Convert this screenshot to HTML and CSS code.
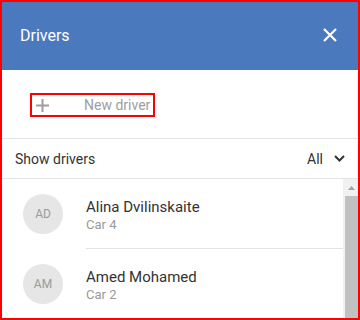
FILE: index.html
```html
<!DOCTYPE html>
<html lang="en">
<head>
  <meta charset="UTF-8">
  <meta name="viewport" content="width=device-width, initial-scale=1.0">
  <link rel="stylesheet" href="styles.css">
  <title>Drivers</title>
</head>
<body>
  <div class="panel">
    <div class="header">
      <span class="title">Drivers</span>
      <button class="close" aria-label="Close">
        <svg width="14" height="14" viewBox="0 0 14 14">
          <path d="M1 1L13 13M13 1L1 13" stroke="#fff" stroke-width="2.2" fill="none"/>
        </svg>
      </button>
    </div>

    <div class="actions">
      <button class="new-driver">
        <svg class="plus" width="15" height="15" viewBox="0 0 15 15">
          <path d="M7.5 1V14M1 7.5H14" stroke="#9e9e9e" stroke-width="2" fill="none"/>
        </svg>
        <span>New driver</span>
      </button>
    </div>

    <div class="filter">
      <span>Show drivers</span>
      <span class="select">All
        <svg width="11" height="7" viewBox="0 0 11 7">
          <path d="M1 1L5.5 5.5L10 1" stroke="#333" stroke-width="2" fill="none"/>
        </svg>
      </span>
    </div>

    <div class="list-wrap">
      <div class="list">
        <div class="driver">
          <div class="avatar">AD</div>
          <div class="info">
            <div class="name">Alina Dvilinskaite</div>
            <div class="car">Car 4</div>
          </div>
        </div>
        <div class="driver">
          <div class="avatar">AM</div>
          <div class="info">
            <div class="name">Amed Mohamed</div>
            <div class="car">Car 2</div>
          </div>
        </div>
      </div>
      <div class="scrollbar">
        <div class="scroll-up">
          <svg width="7" height="4" viewBox="0 0 7 4">
            <path d="M0 4L3.5 0L7 4Z" fill="#a3a3a3"/>
          </svg>
        </div>
        <div class="scroll-thumb"></div>
      </div>
    </div>
  </div>
</body>
</html>
```

FILE: styles.css
```css
body {
  margin: 0;
  font-family: Roboto, 'Liberation Sans', sans-serif;
}

.panel {
  box-sizing: border-box;
  width: 360px;
  height: 320px;
  border: 2px solid #ff0000;
  overflow: hidden;
  display: flex;
  flex-direction: column;
  background: #fff;
}

.header {
  flex: none;
  height: 68px;
  background-color: #4b79bd;
  display: flex;
  align-items: center;
  justify-content: space-between;
  padding: 0 21px 0 18px;
}

.title {
  color: #fff;
  font-size: 16px;
  margin-top: -2px;
}

.close {
  border: none;
  background: none;
  padding: 0;
  display: flex;
  margin-top: -2px;
  cursor: pointer;
}

.actions {
  flex: none;
  height: 69px;
  border-bottom: 1px solid #e3e3e3;
  padding: 23px 0 0 28px;
  box-sizing: border-box;
}

.new-driver {
  box-sizing: border-box;
  width: 125px;
  height: 24px;
  border: 2px solid #ff0000;
  background: none;
  padding: 0 0 0 3px;
  display: flex;
  align-items: center;
  font-family: inherit;
  font-size: 14px;
  color: #9e9e9e;
  cursor: pointer;
}

.new-driver span {
  margin-left: 34px;
}

.filter {
  flex: none;
  height: 40px;
  box-sizing: border-box;
  border-bottom: 1px solid #e3e3e3;
  display: flex;
  align-items: center;
  justify-content: space-between;
  padding: 0 13px 0 13px;
  font-size: 14px;
  color: #333;
}

.select {
  display: flex;
  align-items: center;
  gap: 11px;
}

.list-wrap {
  flex: 1;
  display: flex;
  min-height: 0;
}

.list {
  flex: 1;
}

.driver {
  display: flex;
  align-items: center;
  height: 70px;
}

.avatar {
  flex: none;
  width: 40px;
  height: 40px;
  border-radius: 50%;
  background-color: #e6e6e6;
  color: #9a9a9a;
  font-size: 12px;
  display: flex;
  align-items: center;
  justify-content: center;
  margin: 0 23px 0 21px;
}

.info {
  flex: 1;
  height: 69px;
  border-bottom: 1px solid #e3e3e3;
  display: flex;
  flex-direction: column;
  justify-content: center;
  padding-top: 2px;
  box-sizing: border-box;
}

.name {
  font-size: 15px;
  line-height: 20px;
  color: #333;
}

.car {
  font-size: 13px;
  line-height: 16px;
  color: #999;
}

.scrollbar {
  flex: none;
  width: 15px;
  background-color: #f1f1f1;
  display: flex;
  flex-direction: column;
}

.scroll-up {
  height: 17px;
  display: flex;
  align-items: center;
  justify-content: center;
  padding-left: 1px;
}

.scroll-thumb {
  flex: 1;
  margin-left: 2px;
  background-color: #c1c1c1;
}
```
